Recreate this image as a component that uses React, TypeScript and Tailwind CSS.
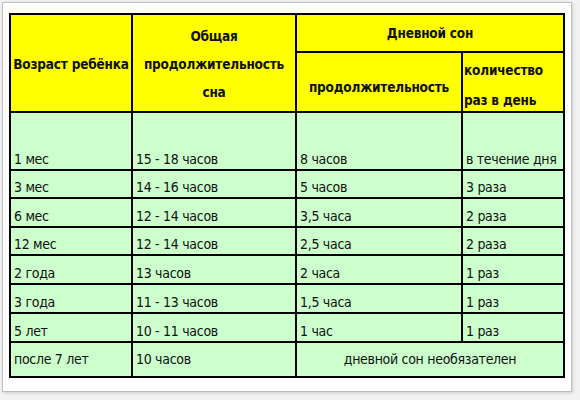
const rows: [string, string, string, string][] = [
  ["1 мес", "15 - 18 часов", "8 часов", "в течение дня"],
  ["3 мес", "14 - 16 часов", "5 часов", "3 раза"],
  ["6 мес", "12 - 14 часов", "3,5 часа", "2 раза"],
  ["12 мес", "12 - 14 часов", "2,5 часа", "2 раза"],
  ["2 года", "13 часов", "2 часа", "1 раз"],
  ["3 года", "11 - 13 часов", "1,5 часа", "1 раз"],
  ["5 лет", "10 - 11 часов", "1 час", "1 раз"],
];

function Cell({ children }: { children: React.ReactNode }) {
  return (
    <div className="flex items-end bg-[#ccffcc] pb-[1px] pl-[3px] leading-[17px] whitespace-nowrap">
      {children}
    </div>
  );
}

export default function App() {
  return (
    <div className="h-[400px] w-[580px] bg-[#f2f2f2] pt-[2px] pl-[2px]">
      <div className="h-[390px] w-[570px] border border-[#bfbfbf] bg-white pt-[10px] pl-[6px] shadow-[1px_1px_3px_rgba(0,0,0,0.15)]">
        <div className="grid w-[556px] grid-cols-[120px_162px_164px_100px] grid-rows-[36px_58px_56px_26px_27px_26px_27px_27px_27px_33px] gap-[2px] bg-black p-[2px] text-[14px] tracking-[-0.3px] text-[#111] [font-family:'DejaVu_Sans_Condensed','DejaVu_Sans',sans-serif] [font-stretch:condensed]">
          <div className="row-span-2 flex items-center justify-center bg-[#ffff00] pt-[2px] text-[13.5px] font-bold tracking-[-0.2px] whitespace-nowrap">
            Возраст ребёнка
          </div>
          <div className="row-span-2 flex flex-col items-center justify-center bg-[#ffff00] pt-[2px] text-[13.5px] leading-[28px] font-bold tracking-[-0.2px]">
            <span>Общая</span>
            <span>продолжительность</span>
            <span>сна</span>
          </div>
          <div className="col-span-2 flex items-center justify-center bg-[#ffff00] text-[13.5px] font-bold tracking-[-0.2px]">
            Дневной сон
          </div>
          <div className="flex items-center justify-center bg-[#ffff00] pt-[10px] text-[13.5px] font-bold tracking-[-0.2px]">
            продолжительность
          </div>
          <div className="flex flex-col justify-between bg-[#ffff00] pt-[7px] pb-[1px] pl-[1px] text-[13.5px] leading-[20px] font-bold tracking-[-0.2px] whitespace-nowrap">
            <span>количество</span>
            <span>раз в день</span>
          </div>

          {rows.map((r) =>
            r.map((c, i) => <Cell key={r[0] + i}>{c}</Cell>)
          )}

          <div className="flex items-center bg-[#ccffcc] pl-[3px]">после 7 лет</div>
          <div className="flex items-center bg-[#ccffcc] pl-[3px]">10 часов</div>
          <div className="col-span-2 flex items-center justify-center bg-[#ccffcc]">
            дневной сон необязателен
          </div>
        </div>
      </div>
    </div>
  );
}
